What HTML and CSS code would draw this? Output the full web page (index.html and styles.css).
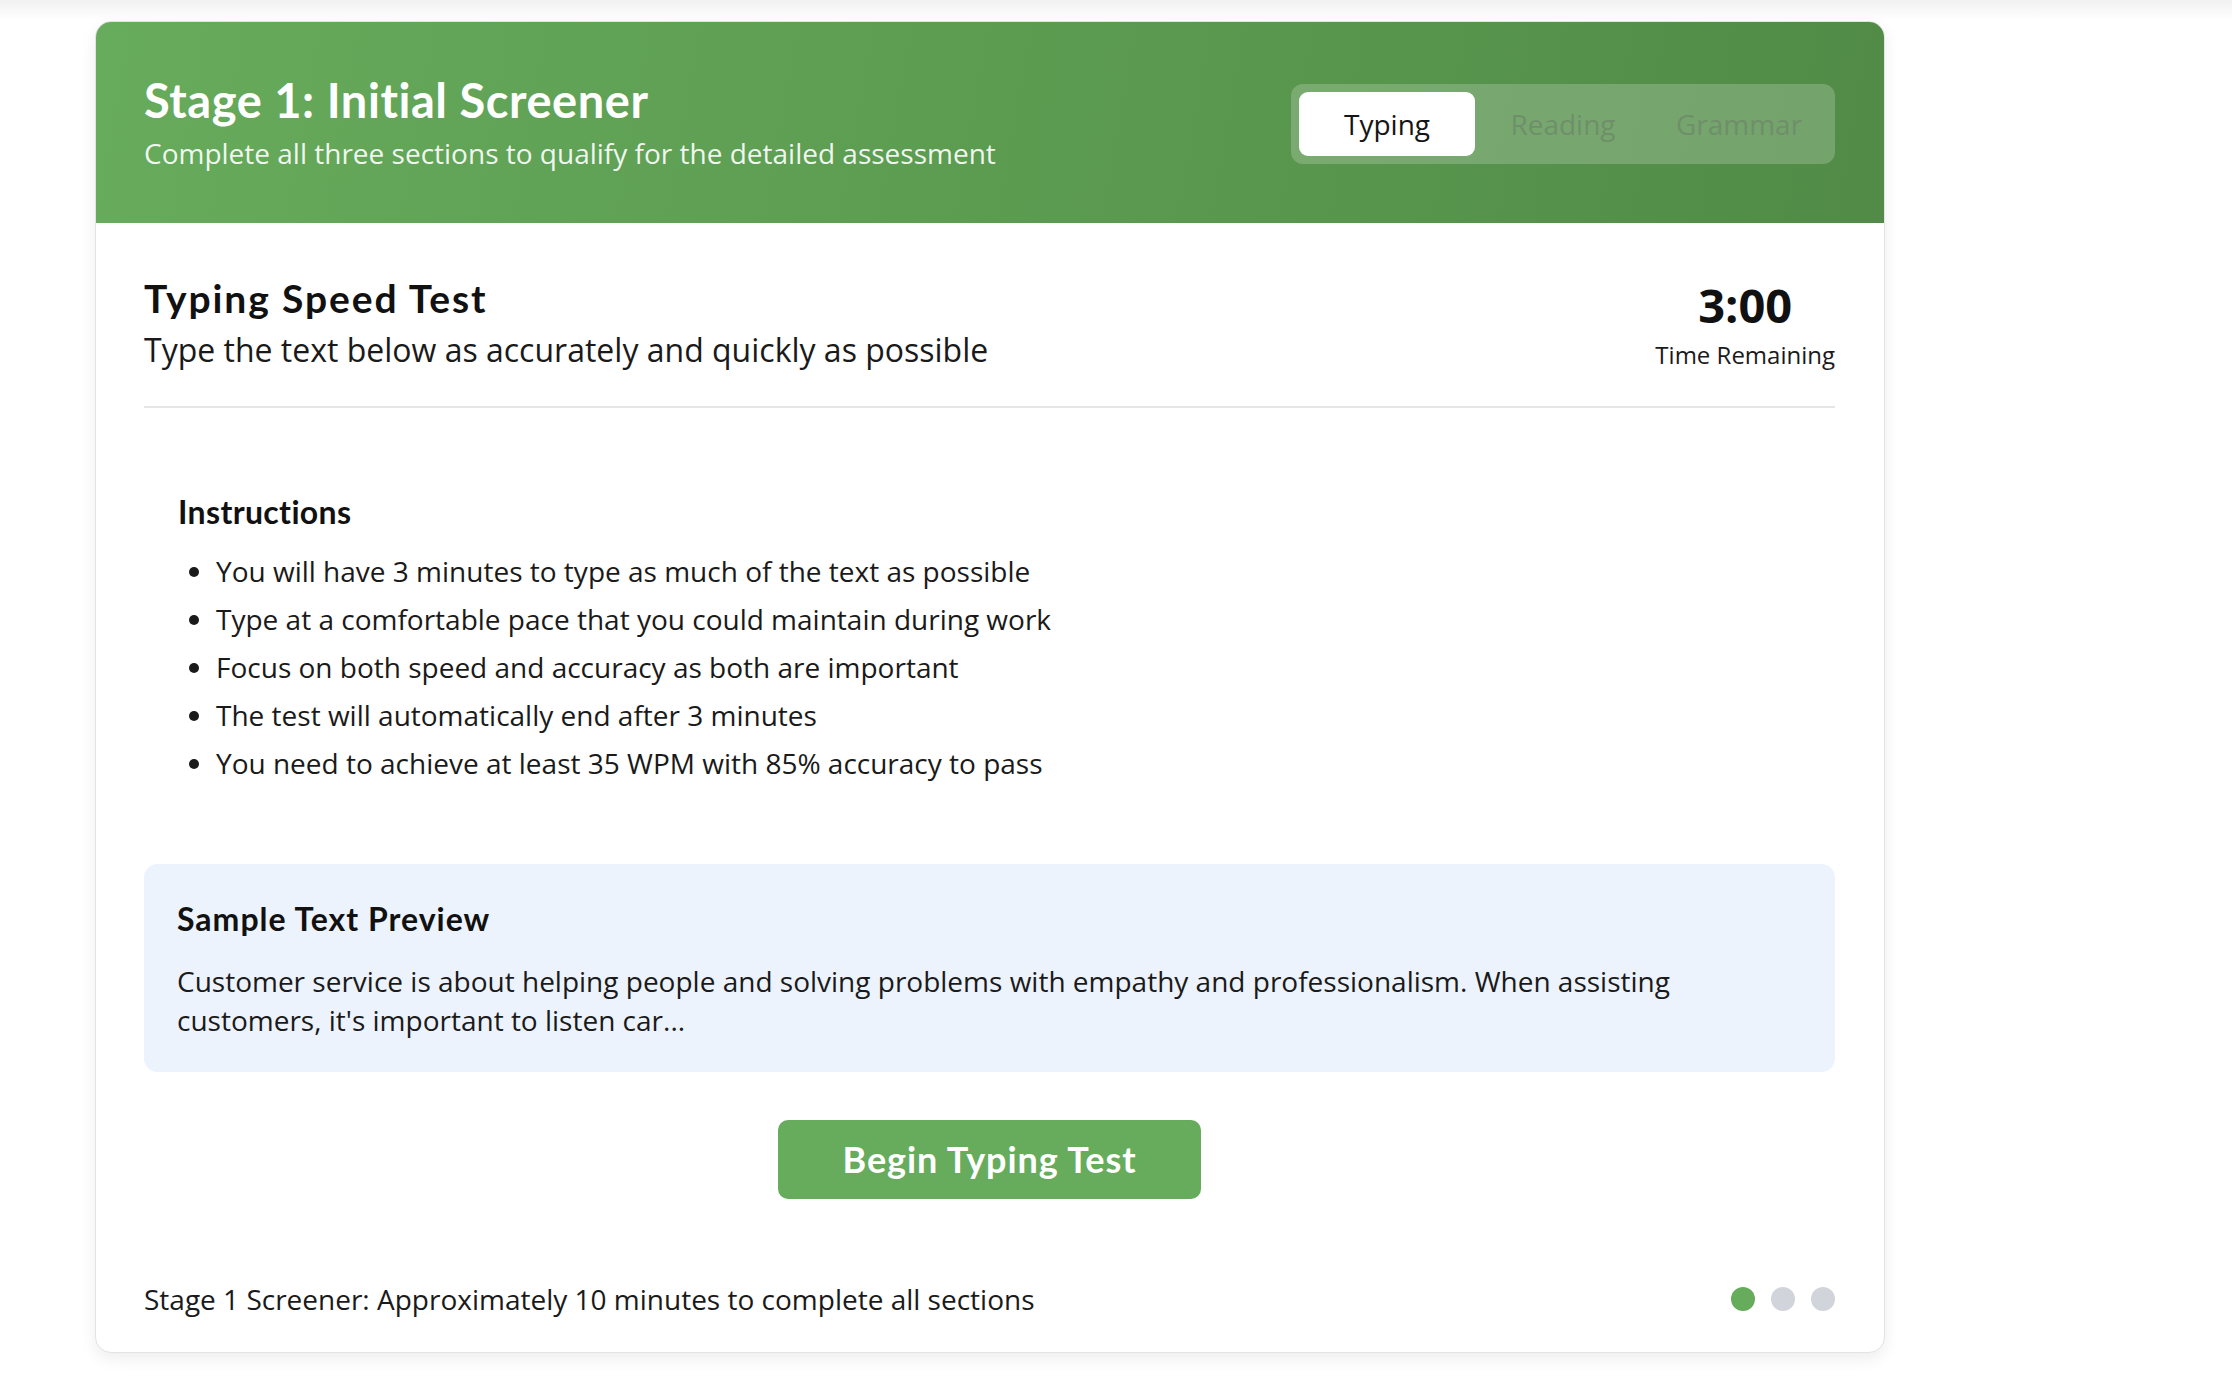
FILE: index.html
```html
<!DOCTYPE html>
<html lang="en">
<head>
<meta charset="utf-8">
<title>Stage 1: Initial Screener</title>
<link rel="stylesheet" href="styles.css">
</head>
<body>
<div class="card">
  <header class="card-header">
    <div class="header-text">
      <h1 class="stage-title">Stage 1: Initial Screener</h1>
      <p class="stage-sub">Complete all three sections to qualify for the detailed assessment</p>
    </div>
    <nav class="tabs">
      <span class="tab tab-active">Typing</span>
      <span class="tab">Reading</span>
      <span class="tab">Grammar</span>
    </nav>
  </header>

  <main class="card-body">
    <div class="test-head">
      <div class="test-info">
        <h2 class="test-title">Typing Speed Test</h2>
        <p class="test-desc">Type the text below as accurately and quickly as possible</p>
      </div>
      <div class="timer">
        <div class="timer-value">3:00</div>
        <div class="timer-label">Time Remaining</div>
      </div>
    </div>

    <section class="instructions">
      <h3 class="block-title">Instructions</h3>
      <ul class="instr-list">
        <li>You will have 3 minutes to type as much of the text as possible</li>
        <li>Type at a comfortable pace that you could maintain during work</li>
        <li>Focus on both speed and accuracy as both are important</li>
        <li>The test will automatically end after 3 minutes</li>
        <li>You need to achieve at least 35 WPM with 85% accuracy to pass</li>
      </ul>
    </section>

    <section class="sample">
      <h3 class="block-title sample-title">Sample Text Preview</h3>
      <p class="sample-text">Customer service is about helping people and solving problems with empathy and professionalism. When assisting customers, it's important to listen car...</p>
    </section>

    <div class="actions">
      <button class="begin-btn" type="button">Begin Typing Test</button>
    </div>
  </main>

  <footer class="card-footer">
    <span class="footer-note">Stage 1 Screener: Approximately 10 minutes to complete all sections</span>
    <div class="dots">
      <span class="dot dot-active"></span>
      <span class="dot"></span>
      <span class="dot"></span>
    </div>
  </footer>
</div>
</body>
</html>
```

FILE: styles.css
```css
* { box-sizing: border-box; }

html, body {
  margin: 0;
  padding: 0;
}

body {
  background: linear-gradient(#f1f1f1 0px, #ffffff 20px);
  font-family: "Open Sans", "Noto Sans", sans-serif;
  color: #151515;
  min-height: 1388px;
}

.card {
  width: 1790px;
  margin: 21px 0 0 95px;
  background: #ffffff;
  border: 1px solid #e3e3e3;
  border-radius: 16px;
  overflow: hidden;
  box-shadow: 0 6px 16px rgba(0, 0, 0, 0.07);
}

/* Header */
.card-header {
  display: flex;
  justify-content: space-between;
  align-items: center;
  padding: 51px 49px 49px 48px;
  background: linear-gradient(100deg, #67ab5c 0%, #5c9c51 50%, #518b47 100%);
  color: #ffffff;
}

.stage-title {
  margin: 0;
  font-family: "Lato", "Open Sans", sans-serif;
  font-weight: 700;
  font-size: 47px;
  line-height: 55px;
  letter-spacing: 0.55px;
}

.stage-sub {
  margin: 4px 0 0;
  font-size: 28px;
  line-height: 42px;
  color: rgba(255, 255, 255, 0.92);
}

.tabs {
  display: flex;
  padding: 8px;
  border-radius: 12px;
  background: rgba(255, 255, 255, 0.2);
}

.tab {
  width: 176px;
  height: 64px;
  display: flex;
  align-items: center;
  justify-content: center;
  font-size: 28px;
  color: #6f8f6a;
  border-radius: 9px;
}

.tab-active {
  background: #ffffff;
  color: #151515;
}

/* Body */
.card-body {
  padding: 53px 49px 0 48px;
}

.test-head {
  display: flex;
  justify-content: space-between;
  align-items: center;
  padding-bottom: 32px;
  border-bottom: 2px solid #e6e6e6;
}

.test-title {
  margin: 0;
  font-family: "Lato", "Open Sans", sans-serif;
  font-weight: 700;
  font-size: 39px;
  line-height: 44px;
  letter-spacing: 1.9px;
  color: #111111;
}

.test-desc {
  margin: 6px 0 0;
  font-size: 32px;
  line-height: 48px;
  color: #1a1a1a;
}

.timer {
  text-align: center;
}

.timer-value {
  font-weight: 700;
  font-size: 47px;
  line-height: 55px;
  color: #111111;
}

.timer-label {
  margin-top: 4px;
  font-size: 24px;
  line-height: 36px;
  color: #1a1a1a;
}

.instructions {
  margin: 53px 0 45px;
  padding: 32px 34px;
}

.block-title {
  margin: 0;
  font-family: "Lato", "Open Sans", sans-serif;
  font-weight: 700;
  font-size: 32px;
  line-height: 37px;
  letter-spacing: 0.35px;
  color: #111111;
}

.sample-title {
  letter-spacing: 1px;
}

.instr-list {
  margin: 17px 0 0;
  padding-left: 38px;
  font-size: 28px;
  line-height: 48px;
  color: #1a1a1a;
}

.sample {
  background: #ecf3fd;
  border-radius: 14px;
  padding: 36px 33px 33px;
}

.sample-text {
  margin: 25px 0 0;
  font-size: 28px;
  line-height: 38.5px;
  color: #1a1a1a;
  max-width: 1620px;
}

.actions {
  display: flex;
  justify-content: center;
  margin-top: 48px;
}

.begin-btn {
  border: 0;
  border-radius: 10px;
  background: #66ac5c;
  color: #ffffff;
  font-family: "Lato", "Open Sans", sans-serif;
  font-weight: 700;
  font-size: 36px;
  line-height: 41px;
  letter-spacing: 0.9px;
  padding: 19px 65px;
  cursor: pointer;
}

/* Footer */
.card-footer {
  display: flex;
  justify-content: space-between;
  align-items: center;
  padding: 79px 49px 32px 48px;
}

.footer-note {
  font-size: 28px;
  line-height: 42px;
  color: #1a1a1a;
}

.dots {
  display: flex;
  gap: 16px;
}

.dot {
  width: 24px;
  height: 24px;
  border-radius: 50%;
  background: #d1d5db;
}

.dot-active {
  background: #66ac5c;
}
```
